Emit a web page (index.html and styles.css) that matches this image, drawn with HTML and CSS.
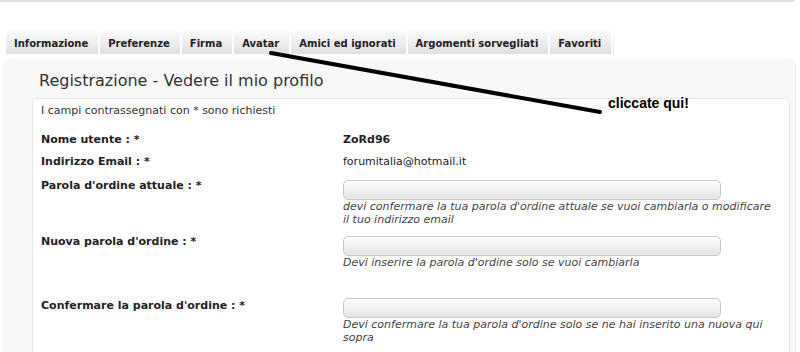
FILE: index.html
```html
<!DOCTYPE html>
<html lang="it">
<head>
    <meta charset="UTF-8">
    <title>Registrazione - Vedere il mio profilo</title>
    <link rel="stylesheet" href="styles.css">
</head>
<body>
    <div class="topline"></div>

    <ul class="tabs">
        <li>Informazione</li>
        <li>Preferenze</li>
        <li>Firma</li>
        <li>Avatar</li>
        <li>Amici ed ignorati</li>
        <li>Argomenti sorvegliati</li>
        <li>Favoriti</li>
    </ul>

    <div class="panel">
        <h1>Registrazione - Vedere il mio profilo</h1>
        <div class="box">
            <p class="note">I campi contrassegnati con * sono richiesti</p>

            <div class="row">
                <div class="label">Nome utente : *</div>
                <div class="value"><b>ZoRd96</b></div>
            </div>
            <div class="row">
                <div class="label">Indirizzo Email : *</div>
                <div class="value">forumitalia@hotmail.it</div>
            </div>
            <div class="row row-input">
                <div class="label">Parola d'ordine attuale : *</div>
                <div class="value">
                    <input type="password" class="field">
                    <div class="help">devi confermare la tua parola d'ordine attuale se vuoi cambiarla o modificare il tuo indirizzo email</div>
                </div>
            </div>
            <div class="row row-input row-space">
                <div class="label">Nuova parola d'ordine : *</div>
                <div class="value">
                    <input type="password" class="field">
                    <div class="help">Devi inserire la parola d'ordine solo se vuoi cambiarla</div>
                </div>
            </div>
            <div class="row row-input row-last">
                <div class="label">Confermare la parola d'ordine : *</div>
                <div class="value">
                    <input type="password" class="field">
                    <div class="help">Devi confermare la tua parola d'ordine solo se ne hai inserito una nuova qui sopra</div>
                </div>
            </div>
        </div>
    </div>

    <svg class="arrow" width="800" height="352" viewBox="0 0 800 352">
        <path d="M271 53 L600 112" stroke="#000" stroke-width="4" stroke-linecap="round" fill="none"/>
    </svg>
    <div class="callout">cliccate qui!</div>
</body>
</html>
```
FILE: styles.css
```css
body {
    margin: 0;
    font-family: 'DejaVu Sans', Verdana, sans-serif;
    font-size: 11px;
    color: #222;
    background-color: #fff;
    overflow: hidden;
}

.topline {
    height: 2px;
    margin: 0 5px 0 0;
    background-color: #dedede;
    border-radius: 0 0 3px 0;
}

.tabs {
    display: flex;
    list-style: none;
    margin: 29px 0 0 6px;
    padding: 0;
    width: 608px;
    height: 23px;
    background: linear-gradient(to bottom, #fbfbfb, #dfdfdf);
}

.tabs li {
    padding: 3px 10px 0 8px;
    line-height: 20px;
    font-weight: bold;
    font-size: 10px;
    color: #222;
    border-right: 2px solid #fff;
    white-space: nowrap;
}

.panel {
    margin: 5px 4px 0 3px;
    padding: 10px 5px 0 29px;
    background-color: #f8f8f8;
    border-radius: 8px 8px 0 0;
    border-right: 1px solid #ececec;
    height: 300px;
}

h1 {
    margin: 0 0 5px 7px;
    font-family: 'DejaVu Sans', Verdana, sans-serif;
    font-size: 16px;
    font-weight: normal;
    color: #333;
    line-height: 24px;
}

.box {
    background-color: #fff;
    border: 1px solid #e4e4e4;
    border-radius: 4px 6px 0 0;
    padding: 4px 8px 0 8px;
    height: 260px;
}

.note {
    margin: 0 0 10px 0;
    line-height: 16px;
    color: #333;
}

.row {
    display: grid;
    grid-template-columns: 302px 1fr;
    padding: 3px 0;
}

.row-input .label {
    padding-top: 2px;
}

.row-space {
    padding-bottom: 22px;
}

.row-last .label {
    padding-top: 4px;
}

.label {
    font-weight: bold;
    line-height: 16px;
}

.value {
    line-height: 16px;
}

.field {
    display: block;
    box-sizing: border-box;
    width: 378px;
    height: 20px;
    margin: 4px 0 0 0;
    border: 1px solid #c9c9c9;
    border-radius: 5px;
    background: linear-gradient(to bottom, #fcfcfc, #e5e5e5);
}

.help {
    font-style: italic;
    color: #444;
    line-height: 13px;
    width: 432px;
}

.arrow {
    position: absolute;
    left: 0;
    top: 0;
    pointer-events: none;
}

.callout {
    position: absolute;
    left: 608px;
    top: 95px;
    font-family: 'Liberation Sans', Arial, sans-serif;
    font-weight: bold;
    font-size: 14px;
    line-height: 16px;
    color: #000;
}
```
